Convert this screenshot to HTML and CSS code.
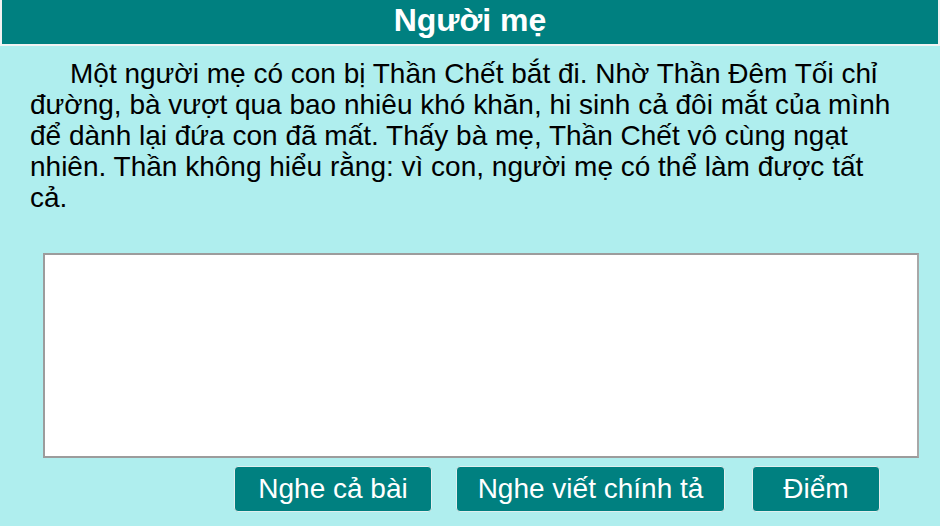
FILE: index.html
```html
<!DOCTYPE html>
<html>
<head>
  <meta charset="utf-8">
  <link rel="stylesheet" href="styles.css">
</head>
<body>
  <div class="header">Người mẹ</div>

  <p class="story">Một người mẹ có con bị Thần Chết bắt đi. Nhờ Thần Đêm Tối chỉ đường, bà vượt qua bao nhiêu khó khăn, hi sinh cả đôi mắt của mình để dành lại đứa con đã mất. Thấy bà mẹ, Thần Chết vô cùng ngạt nhiên. Thần không hiểu rằng: vì con, người mẹ có thể làm được tất cả.</p>

  <div class="answer-box">
    <textarea id="answer"></textarea>
  </div>

  <div class="buttons">
    <button class="btn btn-all" type="button">Nghe cả bài</button>
    <button class="btn btn-write" type="button">Nghe viết chính tả</button>
    <button class="btn btn-score" type="button">Điểm</button>
  </div>
</body>
</html>
```

FILE: styles.css
```css
body {
  margin: 0;
  background-color: #AFEEEE;
  font-family: "Liberation Sans", Arial, sans-serif;
  color: #000;
}
.header {
  height: 44px;
  line-height: 40px;
  background-color: #008080;
  color: #fff;
  font-size: 32px;
  font-weight: bold;
  text-align: center;
  border: 2px solid #f2f2f2;
  border-top: none;
}
.story {
  margin: 12px 40px 0 30px;
  font-size: 28px;
  line-height: 31px;
  text-indent: 40px;
}
.answer-box {
  padding: 40px 20px 0 43px;
}
#answer {
  display: block;
  box-sizing: border-box;
  width: 876px;
  height: 205px;
  border: 2px solid #9c9c9c;
  border-right-color: #a8a8a8;
  background: #fff;
  resize: none;
}
.buttons {
  display: flex;
  gap: 24px;
  padding: 8px 0 0 234px;
}
.btn {
  height: 46px;
  padding: 0;
  background-color: #008080;
  color: #fff;
  font-family: "Liberation Sans", Arial, sans-serif;
  font-size: 28px;
  border: 1px solid #e0eeee;
  border-radius: 4px;
  cursor: pointer;
}
.btn-all {
  width: 198px;
}
.btn-write {
  width: 269px;
  margin-right: 3px;
}
.btn-score {
  width: 128px;
}
```
